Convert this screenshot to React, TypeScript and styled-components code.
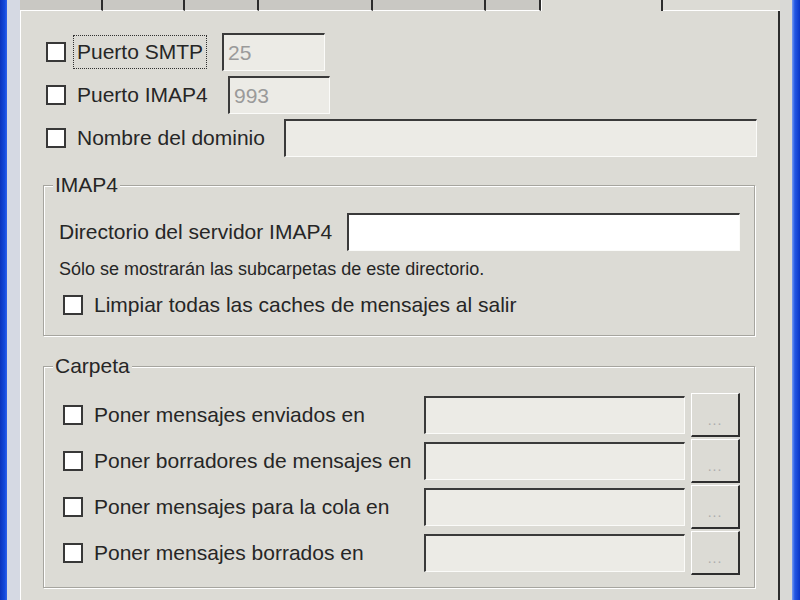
import React from 'react';
import styled, { createGlobalStyle } from 'styled-components';

const GlobalStyle = createGlobalStyle`
  html, body {
    margin: 0;
    padding: 0;
    overflow: hidden;
  }
  body {
    font-family: "Liberation Sans", Arial, sans-serif;
    color: #262626;
  }
`;

const panelBg = '#dcdbd5';

const Screen = styled.div`
  display: flex;
  width: 800px;
  height: 600px;
  background: ${panelBg};
  overflow: hidden;
`;

const BlueEdge = styled.div<{ $w: number; $side: 'left' | 'right' }>`
  width: ${({ $w }) => $w}px;
  flex-shrink: 0;
  background: ${({ $side }) =>
    $side === 'left'
      ? 'linear-gradient(to right, #0a33bc, #1249dc 65%, #2f62ea)'
      : 'linear-gradient(to right, #7a9ff0, #2358e4 35%, #0a36c6)'};
`;

const Gutter = styled.div<{ $w: number; $tone: string }>`
  width: ${({ $w }) => $w}px;
  flex-shrink: 0;
  background: ${({ $tone }) => $tone};
`;

const Dialog = styled.div`
  flex: 1;
  display: flex;
  flex-direction: column;
  min-width: 0;
`;

const TabStrip = styled.div`
  display: flex;
  height: 11px;
  flex-shrink: 0;
`;

const Tab = styled.div<{ $w: number }>`
  box-sizing: border-box;
  width: ${({ $w }) => $w}px;
  flex-shrink: 0;
  background: #c9c8c3;
  border-right: 2px solid #2c2c2c;
  border-bottom: 1px solid #ffffff;
`;

const ActiveTab = styled.div<{ $w: number }>`
  box-sizing: border-box;
  width: ${({ $w }) => $w}px;
  flex-shrink: 0;
  background: ${panelBg};
  border-left: 1px solid #ffffff;
  border-right: 2px solid #2c2c2c;
`;

const TabFiller = styled.div`
  flex: 1;
  border-bottom: 1px solid #ffffff;
`;

const Panel = styled.div`
  flex: 1;
  display: flex;
  flex-direction: column;
  border-left: 1px solid #ffffff;
  border-right: 2px solid #2c2c2c;
  padding: 22px 23px 0 22px;
`;

const OptionRow = styled.div<{ $gap?: number }>`
  display: flex;
  align-items: center;
  height: 38px;
  margin-left: 3px;
  margin-top: ${({ $gap }) => $gap ?? 0}px;
`;

const CheckLabel = styled.label<{ $w: number }>`
  display: flex;
  align-items: center;
  width: ${({ $w }) => $w}px;
  flex-shrink: 0;
`;

const Box = styled.span`
  box-sizing: border-box;
  width: 20px;
  height: 20px;
  flex-shrink: 0;
  background: #ffffff;
  border: 2px solid #383838;
`;

const Caption = styled.span<{ $focused?: boolean }>`
  margin-left: 7px;
  padding: 4px 3px;
  font-size: 21px;
  line-height: 24px;
  white-space: nowrap;
  border: 1px dotted ${({ $focused }) => ($focused ? '#303030' : 'transparent')};
`;

const TextField = styled.input<{ $w: number; $white?: boolean }>`
  box-sizing: border-box;
  width: ${({ $w }) => $w}px;
  height: 38px;
  flex-shrink: 0;
  margin: 0;
  padding: 0 4px;
  border-style: solid;
  border-width: 2px 1px 1px 2px;
  border-color: #3a3a3a #fbfbf9 #fbfbf9 #3a3a3a;
  background: ${({ $white }) => ($white ? '#ffffff' : '#ecebe6')};
  font-family: "Liberation Sans", Arial, sans-serif;
  font-size: 21px;
  color: #9a9a9a;
  outline: none;
`;

const Group = styled.fieldset<{ $top: number; $pad: string }>`
  margin: ${({ $top }) => $top}px 0 0 0;
  padding: ${({ $pad }) => $pad};
  min-width: 0;
  border: 1px solid #a6a59f;
  box-shadow: inset 1px 1px 0 #ffffff, 1px 1px 0 #ffffff;
`;

const GroupTitle = styled.legend`
  margin-left: -6px;
  padding: 0 2px;
  font-size: 21px;
  line-height: 24px;
  background: ${panelBg};
`;

const FieldRow = styled.div`
  display: flex;
  align-items: center;
  height: 38px;
`;

const FieldLabel = styled.span<{ $w: number }>`
  width: ${({ $w }) => $w}px;
  flex-shrink: 0;
  font-size: 21px;
  white-space: nowrap;
`;

const Hint = styled.div`
  margin-top: 8px;
  font-size: 18px;
  line-height: 20px;
  white-space: nowrap;
`;

const InnerCheck = styled.div<{ $top: number }>`
  display: flex;
  align-items: center;
  height: 24px;
  margin: ${({ $top }) => $top}px 0 0 4px;
`;

const FolderRow = styled.div`
  display: flex;
  align-items: center;
  height: 44px;
  margin-left: 4px;
  & + & {
    margin-top: 2px;
  }
`;

const BrowseButton = styled.button`
  box-sizing: border-box;
  width: 50px;
  height: 44px;
  margin-left: 6px;
  padding: 0 0 7px;
  display: flex;
  align-items: flex-end;
  justify-content: center;
  border-style: solid;
  border-width: 1px 2px 2px 1px;
  border-color: #ffffff #2e2e2e #2e2e2e #ffffff;
  background: ${panelBg};
  font-family: "Liberation Sans", Arial, sans-serif;
  font-size: 14px;
  letter-spacing: 1px;
  color: #acacac;
`;

const tabs = [83, 82, 74, 114, 113, 55];

const ports = [
  { label: 'Puerto SMTP', value: '25', labelW: 176, fieldW: 103, focused: true },
  { label: 'Puerto IMAP4', value: '993', labelW: 182, fieldW: 102 },
  { label: 'Nombre del dominio', value: '', labelW: 238, fieldW: 473 },
];

const folders = [
  'Poner mensajes enviados en',
  'Poner borradores de mensajes en',
  'Poner mensajes para la cola en',
  'Poner mensajes borrados en',
];

function App() {
  return (
    <>
      <GlobalStyle />
      <Screen>
        <BlueEdge $w={7} $side="left" />
        <Gutter $w={13} $tone="#d5d9e3" />
        <Dialog>
          <TabStrip>
            {tabs.map((w, i) => (
              <Tab key={i} $w={w} />
            ))}
            <ActiveTab $w={122} />
            <TabFiller />
          </TabStrip>
          <Panel>
            {ports.map((p, i) => (
              <OptionRow key={p.label} $gap={i === 0 ? 0 : 5}>
                <CheckLabel $w={p.labelW}>
                  <Box />
                  <Caption $focused={p.focused}>{p.label}</Caption>
                </CheckLabel>
                <TextField $w={p.fieldW} readOnly defaultValue={p.value} />
              </OptionRow>
            ))}

            <Group $top={16} $pad="16px 14px 18px 15px">
              <GroupTitle>IMAP4</GroupTitle>
              <FieldRow>
                <FieldLabel $w={288}>Directorio del servidor IMAP4</FieldLabel>
                <TextField $w={393} $white readOnly defaultValue="" />
              </FieldRow>
              <Hint>Sólo se mostrarán las subcarpetas de este directorio.</Hint>
              <InnerCheck $top={14}>
                <CheckLabel $w={600}>
                  <Box />
                  <Caption>Limpiar todas las caches de mensajes al salir</Caption>
                </CheckLabel>
              </InnerCheck>
            </Group>

            <Group $top={18} $pad="15px 14px 12px 15px">
              <GroupTitle>Carpeta</GroupTitle>
              {folders.map((f) => (
                <FolderRow key={f}>
                  <CheckLabel $w={361}>
                    <Box />
                    <Caption>{f}</Caption>
                  </CheckLabel>
                  <TextField $w={261} readOnly defaultValue="" />
                  <BrowseButton type="button">...</BrowseButton>
                </FolderRow>
              ))}
            </Group>
          </Panel>
        </Dialog>
        <Gutter $w={12} $tone="#d9d9d6" />
        <BlueEdge $w={8} $side="right" />
      </Screen>
    </>
  );
}

export default App;
